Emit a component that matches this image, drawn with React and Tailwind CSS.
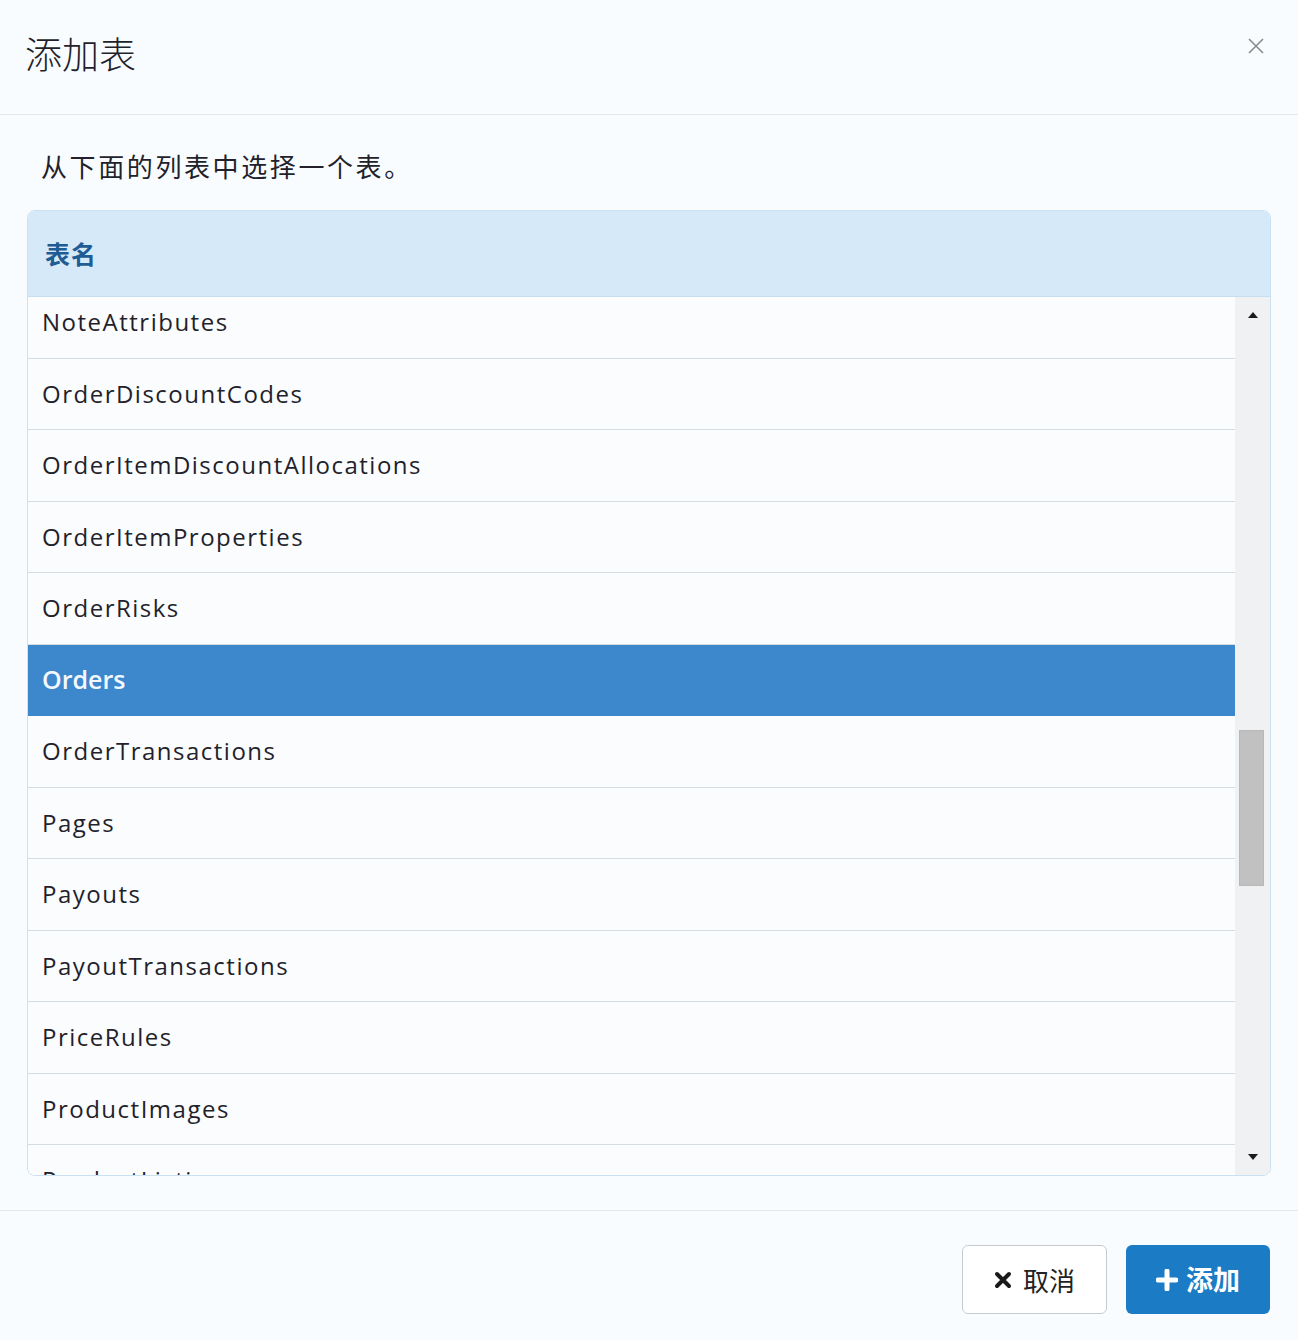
import React from 'react';

const rows = [
  'NoteAttributes',
  'OrderDiscountCodes',
  'OrderItemDiscountAllocations',
  'OrderItemProperties',
  'OrderRisks',
  'Orders',
  'OrderTransactions',
  'Pages',
  'Payouts',
  'PayoutTransactions',
  'PriceRules',
  'ProductImages',
  'ProductListings',
];

const cjk = { fontFamily: '"Noto Sans CJK SC", "Noto Sans", sans-serif' };
const latin = { fontFamily: '"Open Sans", "Noto Sans CJK SC", sans-serif' };

const App = () => {
  return (
    <div className="w-[1298px] h-[1340px] bg-[#f9fcfe] text-[#231f2b] flex flex-col" style={cjk}>
      {/* header */}
      <div className="h-[115px] flex items-center justify-between pl-[25px] pr-[34px] border-b border-[#e3e7ea] shrink-0">
        <h1 className="text-[37px] font-light leading-none -mt-[8px]">添加表</h1>
        <svg width="16" height="16" viewBox="0 0 16 16" className="-mt-[22px]">
          <path d="M1 1L15 15M15 1L1 15" stroke="#8a8a8a" strokeWidth="1.6" />
        </svg>
      </div>

      {/* body */}
      <div className="flex-1 flex flex-col px-[27px] pt-[38px]">
        <p className="pl-[14px] text-[26px] tracking-[2.6px] leading-none mb-[31px]">从下面的列表中选择一个表。</p>

        <div className="h-[966px] border border-[#c9e1f2] rounded-[8px] overflow-hidden flex flex-col bg-white">
          <div className="h-[86px] bg-[#d6e9f8] flex items-center pl-[17px] shrink-0 border-b border-[#c6def0]">
            <span className="text-[25px] font-bold text-[#1f5c94] tracking-[1px]">表名</span>
          </div>
          <div className="flex-1 flex overflow-hidden">
            <div className="flex-1 overflow-hidden">
              <div className="-mt-[10px]">
                {rows.map((r) => {
                  const sel = r === 'Orders';
                  return (
                    <div
                      key={r}
                      className={
                        sel
                          ? 'h-[71.5px] flex items-center pl-[14px] bg-[#3d88cc] border-b border-[#3d88cc]'
                          : 'h-[71.5px] flex items-center pl-[14px] bg-[#fafcfe] border-b border-[#d5dde2]'
                      }
                    >
                      <span
                        className={
                          sel
                            ? 'text-[25px] font-semibold text-[#f4f9ff]'
                            : 'text-[24px] tracking-[1.5px] text-[#231f2b]'
                        }
                        style={latin}
                      >
                        {r}
                      </span>
                    </div>
                  );
                })}
              </div>
            </div>
            {/* scrollbar */}
            <div className="w-[35px] bg-[#f0f1f2] flex flex-col shrink-0">
              <div className="h-[36px] flex items-center justify-center">
                <svg width="12" height="8" viewBox="0 0 12 8"><path d="M6 1L11 7H1Z" fill="#1a1a1a" /></svg>
              </div>
              <div className="h-[397px]" />
              <div className="ml-[4px] w-[25px] h-[156px] bg-[#c1c1c2] border border-[#b8b8b8]" />
              <div className="flex-1" />
              <div className="h-[36px] flex items-center justify-center">
                <svg width="12" height="8" viewBox="0 0 12 8"><path d="M6 7L11 1H1Z" fill="#1a1a1a" /></svg>
              </div>
            </div>
          </div>
        </div>
      </div>

      {/* footer */}
      <div className="h-[130px] border-t border-[#e3e7ea] flex items-start justify-end gap-[19px] pt-[34px] pr-[28px] shrink-0">
        <button className="w-[145px] h-[69px] bg-white border border-[#c8cbce] rounded-[6px] flex items-center justify-center gap-[11px]">
          <svg width="18" height="18" viewBox="0 0 18 18">
            <path d="M3 3L15 15M15 3L3 15" stroke="#1a1a1a" strokeWidth="4" strokeLinecap="round" />
          </svg>
          <span className="text-[26px] text-[#222]">取消</span>
        </button>
        <button className="w-[144px] h-[69px] bg-[#1b7bc4] rounded-[6px] flex items-center justify-center gap-[8px]">
          <svg width="22" height="22" viewBox="0 0 22 22">
            <path d="M11 2V20M2 11H20" stroke="#fff" strokeWidth="5" strokeLinecap="round" />
          </svg>
          <span className="text-[27px] font-bold text-white">添加</span>
        </button>
      </div>
    </div>
  );
};

export default App;
